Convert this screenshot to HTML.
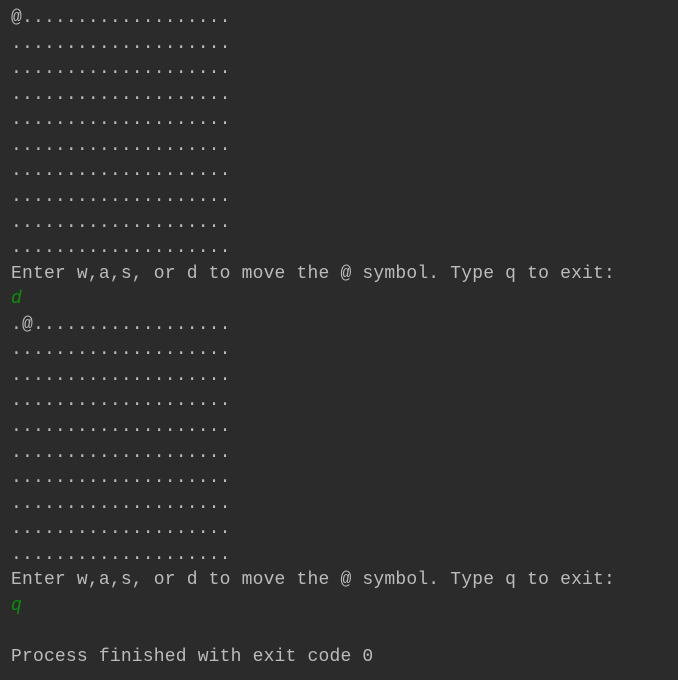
<!DOCTYPE html>
<html><head><style>
html,body{margin:0;padding:0;background:#2b2b2b;width:678px;height:680px;overflow:hidden}
pre{margin:0;position:absolute;left:11px;top:6px;font-family:"Liberation Mono",monospace;font-size:18px;letter-spacing:0.18px;line-height:25.56px;color:#bbbbbb}
i{color:#0a8f0a}
</style></head><body><pre>@...................
....................
....................
....................
....................
....................
....................
....................
....................
....................
Enter w,a,s, or d to move the @ symbol. Type q to exit:
<i>d</i>
.@..................
....................
....................
....................
....................
....................
....................
....................
....................
....................
Enter w,a,s, or d to move the @ symbol. Type q to exit:
<i>q</i>

Process finished with exit code 0</pre></body></html>
